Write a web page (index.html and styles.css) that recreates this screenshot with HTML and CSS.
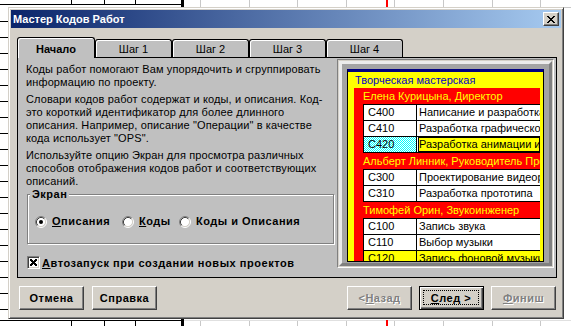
FILE: index.html
```html
<!DOCTYPE html>
<html lang="ru">
<head>
<meta charset="utf-8">
<title>Мастер Кодов Работ</title>
<link rel="stylesheet" href="styles.css">
</head>
<body>
<div class="dialog">
  <div class="titlebar">
    <span class="title">Мастер Кодов Работ</span>
    <button class="close" type="button" aria-label="Закрыть">
      <svg width="8" height="7" viewBox="0 0 8 7" shape-rendering="crispEdges"><path d="M0 0h2v1H0zM6 0h2v1H6zM1 1h2v1H1zM5 1h2v1H5zM2 2h4v1H2zM3 3h2v1H3zM2 4h4v1H2zM1 5h2v1H1zM5 5h2v1H5zM0 6h2v1H0zM6 6h2v1H6z" fill="#000"/></svg>
    </button>
  </div>

  <div class="tabs">
    <div class="tab active">Начало</div>
    <div class="tab">Шаг 1</div>
    <div class="tab">Шаг 2</div>
    <div class="tab">Шаг 3</div>
    <div class="tab">Шаг 4</div>
  </div>

  <div class="panel">
    <div class="left">
      <p>Коды работ помогают Вам упорядочить и сгруппировать<br>информацию по проекту.</p>
      <p>Словари кодов работ содержат и коды, и описания. Код-<br>это короткий идентификатор для более длинного<br>описания. Например, описание "Операции" в качестве<br>кода использует "OPS".</p>
      <p>Используйте опцию Экран для просмотра различных<br>способов отображения кодов работ и соответствующих<br>описаний.</p>

      <fieldset class="group">
        <legend>Экран</legend>
        <div class="radios">
          <label class="radio opt1">
            <svg class="rb" width="12" height="12" viewBox="0 0 12 12"><circle cx="6" cy="6" r="4.5" fill="#fff"/><path d="M2.11 9.89A5.5 5.5 0 0 1 9.89 2.11" stroke="#808080" fill="none"/><path d="M9.89 2.11A5.5 5.5 0 0 1 2.11 9.89" stroke="#fff" fill="none"/><path d="M2.82 9.18A4.5 4.5 0 0 1 9.18 2.82" stroke="#404040" fill="none"/><path d="M9.18 2.82A4.5 4.5 0 0 1 2.82 9.18" stroke="#d4d0c8" fill="none"/><circle cx="6" cy="6" r="2" fill="#000"/></svg>
            <span><u>О</u>писания</span>
          </label>
          <label class="radio opt2">
            <svg class="rb" width="12" height="12" viewBox="0 0 12 12"><circle cx="6" cy="6" r="4.5" fill="#fff"/><path d="M2.11 9.89A5.5 5.5 0 0 1 9.89 2.11" stroke="#808080" fill="none"/><path d="M9.89 2.11A5.5 5.5 0 0 1 2.11 9.89" stroke="#fff" fill="none"/><path d="M2.82 9.18A4.5 4.5 0 0 1 9.18 2.82" stroke="#404040" fill="none"/><path d="M9.18 2.82A4.5 4.5 0 0 1 2.82 9.18" stroke="#d4d0c8" fill="none"/></svg>
            <span><u>К</u>оды</span>
          </label>
          <label class="radio">
            <svg class="rb" width="12" height="12" viewBox="0 0 12 12"><circle cx="6" cy="6" r="4.5" fill="#fff"/><path d="M2.11 9.89A5.5 5.5 0 0 1 9.89 2.11" stroke="#808080" fill="none"/><path d="M9.89 2.11A5.5 5.5 0 0 1 2.11 9.89" stroke="#fff" fill="none"/><path d="M2.82 9.18A4.5 4.5 0 0 1 9.18 2.82" stroke="#404040" fill="none"/><path d="M9.18 2.82A4.5 4.5 0 0 1 2.82 9.18" stroke="#d4d0c8" fill="none"/></svg>
            <span>Ко<u>д</u>ы и Описания</span>
          </label>
        </div>
      </fieldset>

      <label class="check">
        <span class="cb"><svg width="7" height="7" viewBox="0 0 7 7" shape-rendering="crispEdges"><path d="M0 0h2v1H0zM5 0h2v1H5zM0 1h3v1H0zM4 1h3v1H4zM1 2h5v1H1zM2 3h3v1H2zM1 4h5v1H1zM0 5h3v1H0zM4 5h3v1H4zM0 6h2v1H0zM5 6h2v1H5z" fill="#000"/></svg></span>
        <span><u>А</u>втозапуск при создании новых проектов</span>
      </label>
    </div>

    <div class="preview">
      <div class="bezel">
        <div class="screen">
          <div class="org">Творческая мастерская</div>
          <div class="red">
            <div class="person">Елена Курицына, Директор</div>
            <div class="table">
              <div class="row"><div class="code">C400</div><div class="desc">Написание и разработка сценария</div></div>
              <div class="row"><div class="code">C410</div><div class="desc">Разработка графического дизайна</div></div>
              <div class="row"><div class="code sel">C420</div><div class="desc sel">Разработка анимации и эффектов</div></div>
            </div>
            <div class="person">Альберт Линник, Руководитель Проекта</div>
            <div class="table">
              <div class="row"><div class="code">C300</div><div class="desc">Проектирование видеоряда</div></div>
              <div class="row"><div class="code">C310</div><div class="desc">Разработка прототипа</div></div>
            </div>
            <div class="person">Тимофей Орин, Звукоинженер</div>
            <div class="table">
              <div class="row"><div class="code">C100</div><div class="desc">Запись звука</div></div>
              <div class="row"><div class="code">C110</div><div class="desc">Выбор музыки</div></div>
              <div class="row hl"><div class="code">C120</div><div class="desc">Запись фоновой музыки</div></div>
            </div>
          </div>
        </div>
      </div>
    </div>
  </div>

  <div class="buttons">
    <button class="btn" type="button">Отмена</button>
    <button class="btn" type="button">Справка</button>
    <div class="nav">
      <button class="btn disabled" type="button">&lt; <u>Н</u>азад</button>
      <button class="btn default" type="button"><span class="focus"><u>С</u>лед &gt;</span></button>
      <button class="btn disabled" type="button"><u>Ф</u>иниш</button>
    </div>
  </div>
</div>
</body>
</html>
```

FILE: styles.css
```css
* { box-sizing: border-box; }

html, body { margin: 0; padding: 0; }

body {
  width: 571px;
  height: 326px;
  overflow: hidden;
  font: 11px "Liberation Sans", Arial, sans-serif;
  color: #000;
  background:
    linear-gradient(#000, #000) 0 4px / 183px 1px no-repeat,
    linear-gradient(#000, #000) 71px 0 / 1px 5px no-repeat,
    linear-gradient(#000, #000) 104px 0 / 1px 5px no-repeat,
    linear-gradient(#000, #000) 135px 0 / 1px 5px no-repeat,
    linear-gradient(#000, #000) 181px 0 / 3px 7px no-repeat,
    linear-gradient(#f00, #f00) 386px 0 / 2px 7px no-repeat,
    linear-gradient(#c8c8c8, #c8c8c8) 184px 7px / 387px 1px no-repeat,
    repeating-linear-gradient(to right, #c8c8c8 0 1px, transparent 1px 48.6px) 200px 0 / 371px 7px no-repeat,
    repeating-linear-gradient(to bottom, #000 0 1px, transparent 1px 16px) 0 21px / 8px 300px no-repeat,
    linear-gradient(#000, #000) 0 320px / 183px 1px no-repeat,
    linear-gradient(#000, #000) 71px 320px / 1px 6px no-repeat,
    linear-gradient(#000, #000) 104px 320px / 1px 6px no-repeat,
    linear-gradient(#000, #000) 135px 320px / 1px 6px no-repeat,
    linear-gradient(#000, #000) 181px 319px / 3px 7px no-repeat,
    linear-gradient(#f00, #f00) 386px 320px / 2px 6px no-repeat,
    linear-gradient(#e0e0e0, #e0e0e0) 184px 320px / 387px 1px no-repeat,
    repeating-linear-gradient(to right, #c8c8c8 0 1px, transparent 1px 48.6px) 200px 320px / 371px 6px no-repeat,
    #fff;
}

/* dialog window */
.dialog {
  width: 556px;
  height: 312px;
  margin: 7px 0 0 8px;
  background: #d4d0c8;
  border: 1px solid;
  border-color: #d4d0c8 #404040 #404040 #d4d0c8;
  box-shadow: inset 1px 1px #fff, inset -1px -1px #808080;
  padding: 2px;
  display: flex;
  flex-direction: column;
}

.titlebar {
  height: 18px;
  display: flex;
  align-items: center;
  justify-content: space-between;
  background: linear-gradient(to right, #0a246a, #a6caf0);
  padding: 0 2px 0 2px;
}

.title {
  color: #fff;
  font-weight: bold;
  font-size: 11px;
  white-space: nowrap;
}

.close {
  width: 16px;
  height: 14px;
  padding: 0;
  background: #d4d0c8;
  border: 1px solid;
  border-color: #fff #404040 #404040 #fff;
  box-shadow: inset -1px -1px #808080;
  display: flex;
  align-items: center;
  justify-content: center;
}

/* tabs */
.tabs {
  display: flex;
  align-items: flex-end;
  height: 20px;
  margin: 9px 0 0 6px;
}

.tab {
  width: 77px;
  height: 18px;
  background: #c0c0c0;
  border: 1px solid #000;
  border-bottom: 0;
  border-radius: 3px 3px 0 0;
  box-shadow: inset 1px 1px #fff;
  display: flex;
  align-items: center;
  justify-content: center;
  white-space: nowrap;
}

.tab.active {
  width: 78px;
  height: 21px;
  margin-bottom: -1px;
  position: relative;
  z-index: 1;
  font-weight: bold;
  padding-top: 1px;
}

/* tab panel */
.panel {
  width: 540px;
  height: 221px;
  margin-left: 6px;
  border: 1px solid #000;
  background: #c0c0c0;
  display: flex;
  align-items: flex-start;
}

.left {
  flex: 1;
  padding: 5px 0 0 8px;
}

.left p {
  margin: 0 0 4px;
  line-height: 13px;
  letter-spacing: 0.12px;
  white-space: nowrap;
}

.group {
  margin: -4px 3px 0 1px;
  padding: 14px 0 15px 0;
  min-width: 0;
  border: 1px solid #808080;
  box-shadow: inset 1px 1px #fff, 1px 1px #fff;
}

.group legend {
  margin-left: 2px;
  padding: 0 2px;
  line-height: 13px;
  font-weight: bold;
  letter-spacing: 0.5px;
  background: #c0c0c0;
}

.radios {
  display: flex;
  align-items: center;
  margin-left: 7px;
  height: 13px;
}

.radio {
  display: flex;
  align-items: center;
  font-weight: bold;
  letter-spacing: 0.5px;
  white-space: nowrap;
  line-height: 13px;
}

.radio .rb {
  flex: none;
  margin-right: 5px;
}

.opt1 { width: 87px; }
.opt2 { width: 57px; }

.check {
  display: flex;
  align-items: center;
  margin: 12px 0 0 1px;
  height: 13px;
  font-weight: bold;
  letter-spacing: 0.55px;
  white-space: nowrap;
}

.cb {
  width: 13px;
  height: 13px;
  margin-right: 2px;
  background: #fff;
  border: 1px solid;
  border-color: #808080 #fff #fff #808080;
  box-shadow: inset 1px 1px #404040, inset -1px -1px #d4d0c8;
  display: flex;
  align-items: center;
  justify-content: center;
  flex: none;
}

/* preview picture */
.preview {
  width: 217px;
  height: 209px;
  margin: 1px 2px 0 0;
  border: 1px solid;
  border-color: #808080 #fff #fff #808080;
  padding: 1px;
  background: #d4d0c8;
}

.bezel {
  height: 100%;
  border: 3px solid;
  border-color: #ececec #808080 #808080 #ececec;
  background: #a4a4a4;
  padding: 5px 5px 1px 5px;
}

.screen {
  height: 100%;
  border: 1px solid #000;
  border-top: 3px solid #000080;
  background: #ff0;
  overflow: hidden;
  white-space: nowrap;
}

.org {
  height: 16px;
  line-height: 16px;
  padding-left: 7px;
  color: #0000c8;
}

.red {
  margin: 0 3px 0 6px;
  background: #f00;
}

.person {
  height: 16px;
  line-height: 16px;
  padding-left: 9px;
  color: #ff0;
  overflow: hidden;
}

.table {
  margin-left: 9px;
  background: #fff;
  border-left: 1px solid #000;
  border-top: 1px solid #000;
}

.row {
  display: flex;
  height: 16px;
  border-bottom: 1px solid #000;
}

.code {
  width: 53px;
  flex: none;
  padding-left: 4px;
  line-height: 15px;
  border-right: 1px solid #000;
}

.desc {
  flex: 1;
  padding-left: 2px;
  line-height: 15px;
  overflow: hidden;
}

.code.sel {
  background: repeating-conic-gradient(#0ff 0 25%, #fff 0 50%) 0 0 / 2px 2px;
}

.desc.sel {
  margin-left: 1px;
  padding-left: 1px;
  background: #ff0;
  box-shadow: inset 0 0 0 1px #000;
}

.row.hl .code,
.row.hl .desc {
  background: #ff0;
}

/* bottom buttons */
.buttons {
  display: flex;
  gap: 8px;
  margin-top: 8px;
  padding-left: 8px;
}

.nav {
  display: flex;
  gap: 7px;
  margin-left: auto;
  margin-right: 5px;
}

.btn {
  width: 65px;
  height: 24px;
  padding: 0;
  font: bold 11px "Liberation Sans", Arial, sans-serif;
  letter-spacing: 0.5px;
  color: #000;
  background: #d4d0c8;
  border: 1px solid;
  border-color: #fff #404040 #404040 #fff;
  box-shadow: inset -1px -1px #808080;
  display: flex;
  align-items: center;
  justify-content: center;
  white-space: nowrap;
}

.btn.disabled {
  color: #808080;
  text-shadow: 1px 1px #fff;
}

.btn.default {
  border: 1px solid #000;
  box-shadow: inset 1px 1px #fff, inset -1px -1px #404040, inset -2px -2px #808080;
  padding: 3px 4px 4px 3px;
}

.focus {
  flex: 1;
  align-self: stretch;
  border: 1px dotted #000;
  display: flex;
  align-items: center;
  justify-content: center;
}
```
